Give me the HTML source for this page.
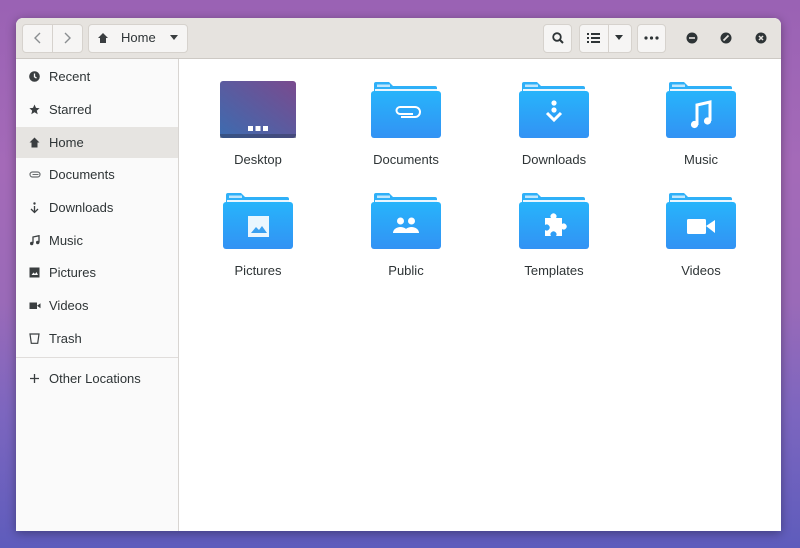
<!DOCTYPE html>
<html><head><meta charset="utf-8"><style>
*{margin:0;padding:0;box-sizing:border-box}
body{width:800px;height:548px;overflow:hidden;position:relative;font-family:"Liberation Sans","DejaVu Sans",sans-serif;
background:linear-gradient(180deg,#9a62b4 0%,#a46ab8 30%,#9a6ab8 55%,#7d66bf 75%,#5e5cbc 100%);}
.win{position:absolute;left:16px;top:18px;width:765px;height:513px;background:#fff;border-radius:7px 7px 0 0;overflow:hidden;box-shadow:0 2px 10px rgba(0,0,0,.35)}
.hdr{position:absolute;left:0;top:0;width:765px;height:41px;background:#e6e3df;border-bottom:1px solid #cdc9c4}
.btn{position:absolute;top:6px;height:29px;background:#f6f5f4;border:1px solid #d6d2cd;border-radius:4px}
.side{position:absolute;left:0;top:41px;width:163px;height:472px;background:#fafafa;border-right:1px solid #d8d5d2}
.it{position:absolute;left:0;width:162px;height:31px;font-size:13px;color:#2e3436;line-height:31px;padding-left:33px}
.it svg{position:absolute;left:13px;top:10px}
.sel{background:#e6e4e1}
.f{position:absolute;width:100px;text-align:center;font-size:13px;color:#2e3436}
.f svg{display:block;margin:0 auto}
.f span{display:block;margin-top:14px}
</style></head><body>
<div class="win">
<div class="hdr">
 <div class="btn" style="left:6px;width:61px"></div>
 <div style="position:absolute;left:36px;top:7px;width:1px;height:27px;background:#d6d2cd"></div>
 <svg style="position:absolute;left:16px;top:13px" width="12" height="14"><path d="M8 2L3 7l5 5" stroke="#8a8e90" stroke-width="1.4" fill="none"/></svg>
 <svg style="position:absolute;left:45px;top:13px" width="12" height="14"><path d="M4 2l5 5-5 5" stroke="#8a8e90" stroke-width="1.4" fill="none"/></svg>
 <div class="btn" style="left:72px;width:100px"></div>
 <svg style="position:absolute;left:81px;top:14px" width="12" height="12"><path d="M6 1L1 6h2v5h6V6h2z" fill="#3a3e40"/></svg>
 <div style="position:absolute;left:105px;top:12px;font-size:13px;color:#2e3436">Home</div>
 <svg style="position:absolute;left:153px;top:16px" width="10" height="8"><path d="M1 1h8L5 6z" fill="#3a3e40"/></svg>
 <div class="btn" style="left:527px;width:29px"></div>
 <svg style="position:absolute;left:535px;top:13px" width="14" height="14"><circle cx="6" cy="6" r="3.8" stroke="#2e3436" stroke-width="1.8" fill="none"/><path d="M9 9l3 3" stroke="#2e3436" stroke-width="2"/></svg>
 <div class="btn" style="left:563px;width:53px"></div>
 <div style="position:absolute;left:592px;top:7px;width:1px;height:27px;background:#d6d2cd"></div>
 <svg style="position:absolute;left:571px;top:14px" width="14" height="12"><g fill="#2e3436"><rect x="0" y="1" width="2" height="2"/><rect x="4" y="1" width="9" height="2"/><rect x="0" y="5" width="2" height="2"/><rect x="4" y="5" width="9" height="2"/><rect x="0" y="9" width="2" height="2"/><rect x="4" y="9" width="9" height="2"/></g></svg>
 <svg style="position:absolute;left:598px;top:16px" width="10" height="8"><path d="M1 1h8L5 6z" fill="#2e3436"/></svg>
 <div class="btn" style="left:621px;width:29px"></div>
 <svg style="position:absolute;left:628px;top:18px" width="15" height="5"><g fill="#2e3436"><circle cx="2" cy="2" r="1.6"/><circle cx="7.5" cy="2" r="1.6"/><circle cx="13" cy="2" r="1.6"/></g></svg>
 <svg style="position:absolute;left:670px;top:14px" width="12" height="12"><circle cx="6" cy="6" r="5.5" fill="#2e3436"/><rect x="3" y="5.2" width="6" height="1.6" fill="#e6e3df"/></svg>
 <svg style="position:absolute;left:704px;top:14px" width="12" height="12"><circle cx="6" cy="6" r="5.5" fill="#2e3436"/><path d="M3.5 8.5l5-5" stroke="#e6e3df" stroke-width="1.8"/></svg>
 <svg style="position:absolute;left:739px;top:14px" width="12" height="12"><circle cx="6" cy="6" r="5.5" fill="#2e3436"/><path d="M4 4l4 4M8 4l-4 4" stroke="#e6e3df" stroke-width="1.5"/></svg>
</div>
<div class="side">
 <div class="it" style="top:2px"><svg width="11" height="11"><circle cx="5.5" cy="5.5" r="5.3" fill="#3a3e40"/><path d="M5.5 2.5v3.3l2 1.3" stroke="#fafafa" stroke-width="1.3" fill="none"/></svg>Recent</div>
 <div class="it" style="top:35px"><svg width="11" height="11"><path d="M5.5 0.5l1.5 3.4 3.6.3-2.8 2.4.9 3.6-3.2-2-3.2 2 .9-3.6L.4 4.2l3.6-.3z" fill="#3a3e40"/></svg>Starred</div>
 <div class="it sel" style="top:68px"><svg width="11" height="11"><path d="M5.5 0.5L0.5 5.5h2v5h6v-5h2z" fill="#3a3e40"/></svg>Home</div>
 <div class="it" style="top:100px"><svg width="12" height="11"><rect x="1" y="3" width="10" height="5" rx="2.5" stroke="#6a6e70" stroke-width="1.2" fill="none"/><path d="M3.5 5.5h6" stroke="#6a6e70" stroke-width="1"/></svg>Documents</div>
 <div class="it" style="top:133px"><svg width="11" height="12"><circle cx="5.5" cy="1.5" r="1.2" fill="#3a3e40"/><path d="M5.5 4v6M2 7l3.5 3.5L9 7" stroke="#3a3e40" stroke-width="1.3" fill="none"/></svg>Downloads</div>
 <div class="it" style="top:166px"><svg width="11" height="11"><path d="M4 8V2l6-1.3V7.5" stroke="#3a3e40" stroke-width="1.3" fill="none"/><circle cx="2.7" cy="8.5" r="1.7" fill="#3a3e40"/><circle cx="8.7" cy="7.5" r="1.7" fill="#3a3e40"/></svg>Music</div>
 <div class="it" style="top:198px"><svg width="11" height="11"><rect x="0.5" y="0.5" width="10" height="10" fill="#3a3e40"/><path d="M2.5 8l2-2.5 1.5 1.5 1.5-2 1.5 3z" fill="#fafafa"/></svg>Pictures</div>
 <div class="it" style="top:231px"><svg width="12" height="11"><rect x="0.5" y="2.5" width="7.5" height="6.5" fill="#3a3e40"/><path d="M8 5.7l3.5-2.5v5z" fill="#3a3e40"/></svg>Videos</div>
 <div class="it" style="top:264px"><svg width="11" height="11"><path d="M1 1h9l-1.3 9.3H2.3z" stroke="#3a3e40" stroke-width="1.2" fill="none"/></svg>Trash</div>
 <div style="position:absolute;left:0;top:298px;width:162px;height:1px;background:#e0dddb"></div>
 <div class="it" style="top:304px"><svg width="11" height="11"><path d="M5.5 1v9M1 5.5h9" stroke="#3a3e40" stroke-width="1.3"/></svg>Other Locations</div>
</div>
<svg width="0" height="0" style="position:absolute"><defs>
<linearGradient id="fg" x1="0" y1="0" x2="0" y2="1"><stop offset="0" stop-color="#27b4fb"/><stop offset="1" stop-color="#3292f4"/></linearGradient>
<linearGradient id="dg" x1="0" y1="1" x2="1" y2="0"><stop offset="0" stop-color="#3c6cb0"/><stop offset="1" stop-color="#7a4a8e"/></linearGradient>
<g id="fold"><path d="M3 2a2 2 0 0 1 2-2h13l4 4h42a2 2 0 0 1 2 2v6H3z" fill="#2fb0f8"/><rect x="6" y="2.5" width="13" height="2.5" fill="#bfe6fd"/><rect x="4" y="7" width="62" height="3" fill="#eaf6fe"/><rect x="0" y="9" width="70" height="47" rx="3" fill="url(#fg)"/></g>
</defs></svg>
<div class="f" style="left:192px;top:62px"><svg width="76" height="58"><rect x="0" y="1" width="76" height="57" rx="3" fill="url(#dg)"/><rect x="0" y="54" width="76" height="4" fill="#2f3a5a" opacity=".5"/><g fill="#fff"><rect x="28" y="46" width="5" height="5"/><rect x="35.5" y="46" width="5" height="5"/><rect x="43" y="46" width="5" height="5"/></g></svg><span>Desktop</span></div>
<div class="f" style="left:340px;top:64px"><svg width="70" height="56"><use href="#fold"/><path d="M30 35h14a5 5 0 0 0 0-10H29a3.5 3.5 0 0 0 0 7h13" stroke="#fff" stroke-width="2" fill="none"/></svg><span>Documents</span></div>
<div class="f" style="left:488px;top:64px"><svg width="70" height="56"><use href="#fold"/><circle cx="35" cy="21" r="2.6" fill="#fff"/><circle cx="35" cy="28" r="2.6" fill="#fff"/><path d="M28 31l7 7 7-7" stroke="#fff" stroke-width="3" fill="none"/></svg><span>Downloads</span></div>
<div class="f" style="left:635px;top:64px"><svg width="70" height="56"><use href="#fold"/><path d="M31 43V23l13-3v19" stroke="#fff" stroke-width="3" fill="none"/><circle cx="28.5" cy="42.5" r="3.6" fill="#fff"/><circle cx="41.5" cy="39" r="3.6" fill="#fff"/></svg><span>Music</span></div>
<div class="f" style="left:192px;top:175px"><svg width="70" height="56"><use href="#fold"/><rect x="25" y="23" width="21" height="21" fill="#eaf6fe"/><path d="M28 40l5-6 3 3 3-4 5 7z" fill="#3aa0f0"/></svg><span>Pictures</span></div>
<div class="f" style="left:340px;top:175px"><svg width="70" height="56"><use href="#fold"/><g fill="#fff"><circle cx="29.5" cy="28" r="3.5"/><circle cx="40.5" cy="28" r="3.5"/><path d="M22 40a7.5 6 0 0 1 15 0z"/><path d="M33 40a7.5 6 0 0 1 15 0z"/></g></svg><span>Public</span></div>
<div class="f" style="left:488px;top:175px"><svg width="70" height="56"><use href="#fold"/><path d="M26 25h6a3 3 0 1 1 5 0h6v6a3 3 0 1 1 0 5v7h-6a3 3 0 1 0-5 0h-6v-6a3 3 0 1 0 0-5z" fill="#fff"/></svg><span>Templates</span></div>
<div class="f" style="left:635px;top:175px"><svg width="70" height="56"><use href="#fold"/><rect x="21" y="26" width="19" height="15" rx="1.5" fill="#fff"/><path d="M40 33l9-6v13z" fill="#fff"/></svg><span>Videos</span></div>
</div>
</body></html>
